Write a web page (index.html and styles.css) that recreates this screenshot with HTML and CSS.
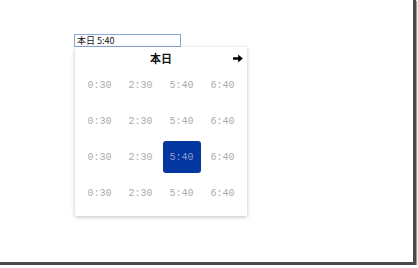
FILE: index.html
```html
<!DOCTYPE html>
<html lang="ja">
<head>
    <meta charset="UTF-8">
    <title>時間選択</title>
    <link rel="stylesheet" href="styles.css">
</head>
<body>
    <div class="screen">
        <div class="picker">
            <input class="time-input" type="text" value="本日 5:40">

            <!-- ドロップダウン -->
            <div class="dropdown">
                <div class="dropdown-head">
                    <span class="day-title">本日</span>
                    <span class="next">
                        <svg width="10" height="9" viewBox="0 0 10 9">
                            <path d="M0 3.2h5.2V0.5L9.8 4.5 5.2 8.5V5.8H0z" fill="#000"/>
                        </svg>
                    </span>
                </div>
                <div class="time-grid">
                    <div class="cell">0:30</div>
                    <div class="cell">2:30</div>
                    <div class="cell">5:40</div>
                    <div class="cell">6:40</div>

                    <div class="cell">0:30</div>
                    <div class="cell">2:30</div>
                    <div class="cell">5:40</div>
                    <div class="cell">6:40</div>

                    <div class="cell">0:30</div>
                    <div class="cell">2:30</div>
                    <div class="cell selected">5:40</div>
                    <div class="cell">6:40</div>

                    <div class="cell">0:30</div>
                    <div class="cell">2:30</div>
                    <div class="cell">5:40</div>
                    <div class="cell">6:40</div>
                </div>
            </div>
        </div>
    </div>
</body>
</html>
```

FILE: styles.css
```css
:root {
    --selected: #0436a0;
    --muted: #ababab;
}
html, body {
    margin: 0;
    padding: 0;
    background: #fff;
}
body {
    font-family: 'Noto Sans CJK JP', 'DejaVu Sans', sans-serif;
}
.screen {
    width: 413px;
    height: 262px;
    border-right: 3px solid #4a4a4a;
    border-bottom: 3px solid #4a4a4a;
    box-shadow: 1px 1px 1px #9a9a9a;
    box-sizing: content-box;
}
.picker {
    padding: 34px 0 0 74px;
    width: 174px;
}
.time-input {
    display: block;
    width: 107px;
    height: 13px;
    box-sizing: border-box;
    margin: 0;
    padding: 0 0 0 2px;
    border: 1px solid #8aa8dc;
    font-family: 'Noto Sans CJK JP', sans-serif;
    font-size: 9px;
    line-height: 11px;
    color: #111;
    outline: none;
}
.dropdown {
    margin: 0 0 0 1px;
    width: 172px;
    background: #fff;
    box-shadow: 0 1px 4px rgba(0,0,0,0.25);
    padding: 0 4px 5px;
    box-sizing: border-box;
}
.dropdown-head {
    height: 20px;
    display: flex;
    align-items: center;
    justify-content: center;
    position: relative;
}
.day-title {
    font-size: 11px;
    font-weight: 700;
    color: #111;
    line-height: 1;
    margin-top: 2px;
}
.next {
    position: absolute;
    right: 0;
    top: 7px;
    line-height: 0;
}
.time-grid {
    display: grid;
    grid-template-columns: repeat(4, 41px);
    grid-auto-rows: 36px;
}
.cell {
    display: flex;
    align-items: center;
    justify-content: center;
    margin: 2px 1.5px;
    font-family: 'Liberation Mono', monospace;
    font-size: 10px;
    color: var(--muted);
    border-radius: 3px;
}
.cell.selected {
    background: var(--selected);
    color: #8f9fcc;
}
```
